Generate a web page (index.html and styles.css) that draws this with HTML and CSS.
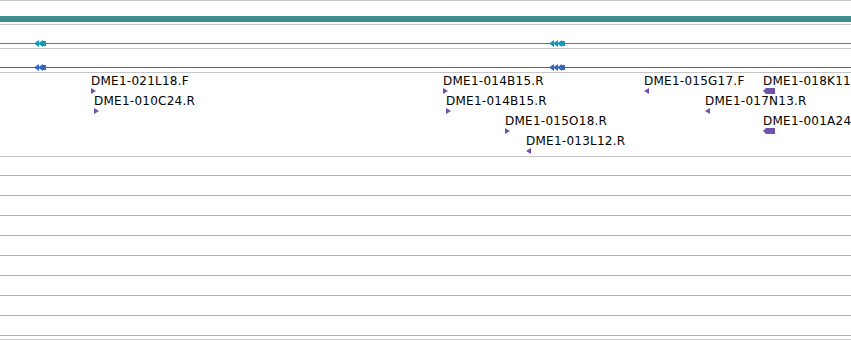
FILE: index.html
```html
<!DOCTYPE html>
<html lang="en">

<head>
    <meta charset="UTF-8">
    <title>Track view</title>
    <link rel="stylesheet" href="styles.css">
</head>

<body>
    <div class="view">
        <div class="ruler">
            <div class="scale"></div>
        </div>

        <div class="track">
            <div class="line cyan"></div>
            <svg class="glyph" style="left:34px" width="12" height="7" viewBox="0 0 12 7">
                <polygon class="fill-cyan" points="0,3.5 5,0 5,7" />
                <polygon class="fill-cyan" points="4,3.5 9,0 9,7" />
                <rect class="fill-cyan" x="8" y="1" width="4" height="5" />
            </svg>
            <svg class="glyph" style="left:549px" width="16" height="7" viewBox="0 0 16 7">
                <polygon class="fill-cyan" points="0,3.5 5,0 5,7" />
                <polygon class="fill-cyan" points="4,3.5 9,0 9,7" />
                <polygon class="fill-cyan" points="8,3.5 13,0 13,7" />
                <rect class="fill-cyan" x="12" y="1" width="4" height="5" />
            </svg>
        </div>

        <div class="track">
            <div class="line blue"></div>
            <svg class="glyph" style="left:34px" width="12" height="7" viewBox="0 0 12 7">
                <polygon class="fill-blue" points="0,3.5 5,0 5,7" />
                <polygon class="fill-blue" points="4,3.5 9,0 9,7" />
                <rect class="fill-blue" x="8" y="1" width="4" height="5" />
            </svg>
            <svg class="glyph" style="left:549px" width="16" height="7" viewBox="0 0 16 7">
                <polygon class="fill-blue" points="0,3.5 5,0 5,7" />
                <polygon class="fill-blue" points="4,3.5 9,0 9,7" />
                <polygon class="fill-blue" points="8,3.5 13,0 13,7" />
                <rect class="fill-blue" x="12" y="1" width="4" height="5" />
            </svg>
        </div>

        <div class="features">
            <!-- row 0 -->
            <div class="feat row0" style="left:91px"><span>DME1-021L18.F</span><i class="fwd"></i></div>
            <div class="feat row0" style="left:443px"><span>DME1-014B15.R</span><i class="fwd"></i></div>
            <div class="feat row0" style="left:644px"><span>DME1-015G17.F</span><i class="rev"></i></div>
            <div class="feat row0" style="left:763px"><span>DME1-018K11.R</span><i class="block"></i></div>
            <!-- row 1 -->
            <div class="feat row1" style="left:94px"><span>DME1-010C24.R</span><i class="fwd"></i></div>
            <div class="feat row1" style="left:446px"><span>DME1-014B15.R</span><i class="fwd"></i></div>
            <div class="feat row1" style="left:705px"><span>DME1-017N13.R</span><i class="rev"></i></div>
            <!-- row 2 -->
            <div class="feat row2" style="left:505px"><span>DME1-015O18.R</span><i class="fwd"></i></div>
            <div class="feat row2" style="left:763px"><span>DME1-001A24.R</span><i class="block"></i></div>
            <!-- row 3 -->
            <div class="feat row3" style="left:526px"><span>DME1-013L12.R</span><i class="rev"></i></div>
        </div>

        <div class="grid">
            <div class="gridrow"></div>
            <div class="gridrow"></div>
            <div class="gridrow"></div>
            <div class="gridrow"></div>
            <div class="gridrow"></div>
            <div class="gridrow"></div>
            <div class="gridrow"></div>
            <div class="gridrow"></div>
            <div class="gridrow"></div>
        </div>
    </div>
</body>

</html>
```

FILE: styles.css
```css
* {
    margin: 0;
    padding: 0;
    box-sizing: border-box;
}

body {
    background: #fff;
    font-family: 'DejaVu Sans', sans-serif;
    overflow: hidden;
}

.view {
    width: 851px;
    height: 340px;
    overflow: hidden;
    border-top: 1px solid #c6c6c6;
}

.ruler {
    height: 24px;
    padding-top: 15px;
    border-bottom: 1px solid #c6c6c6;
}

.scale {
    height: 6px;
    background: #3f8f90;
}

.track {
    position: relative;
    height: 24px;
    padding-top: 18px;
    border-bottom: 1px solid #c6c6c6;
}

.line {
    height: 1px;
}

.line.cyan {
    background: #1597b6;
}

.line.blue {
    background: #3567bd;
}

.glyph {
    position: absolute;
    top: 15px;
    display: block;
}

.fill-cyan {
    fill: #1597b6;
}

.fill-blue {
    fill: #3567bd;
}

.features {
    position: relative;
    height: 84px;
    border-bottom: 1px solid #c6c6c6;
}

.feat {
    position: absolute;
    display: flex;
    flex-direction: column;
    align-items: flex-start;
}

.feat span {
    font-size: 12px;
    line-height: 14px;
    color: #000;
    white-space: nowrap;
    letter-spacing: 0.25px;
}

.row0 { top: 1px; }
.row1 { top: 21px; }
.row2 { top: 41px; }
.row3 { top: 61px; }

.feat i {
    display: block;
    width: 0;
    height: 0;
    border-top: 3px solid transparent;
    border-bottom: 3px solid transparent;
}

.feat .fwd {
    border-left: 5px solid #6e50ad;
}

.feat .rev {
    border-right: 5px solid #6e50ad;
}

.feat .block {
    width: 12px;
    height: 6px;
    border: none;
    background: #6e50ad;
    clip-path: polygon(0 50%, 3px 0, 100% 0, 100% 100%, 3px 100%);
}

.grid {
    height: 183px;
    border-bottom: 1px solid #c6c6c6;
}

.gridrow {
    height: 20px;
    border-bottom: 1px solid #93b6d2;
}

.gridrow:first-child {
    height: 19px;
}
```
